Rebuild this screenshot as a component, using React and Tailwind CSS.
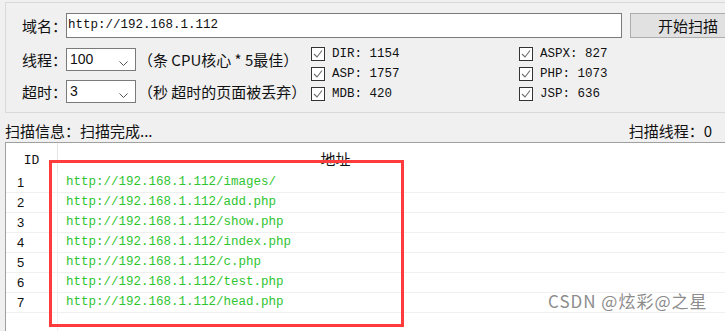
import React from "react";

const mono = "font-['Liberation_Mono',monospace]";

function Check() {
  return (
    <svg width="14" height="14" viewBox="0 0 14 14" className="shrink-0">
      <rect x="0.5" y="0.5" width="13" height="13" fill="#ffffff" stroke="#333333" />
      <polyline points="3,7 6,10 11,3.5" fill="none" stroke="#6a6a6a" strokeWidth="1.1" />
    </svg>
  );
}

function Chevron() {
  return (
    <svg width="9" height="5" viewBox="0 0 9 5" className="absolute right-[7px] top-[12px]">
      <path d="M0.5 0.5 L4.5 4.5 L8.5 0.5" fill="none" stroke="#555555" strokeWidth="1" />
    </svg>
  );
}

function Label({ children }) {
  return (
    <div className="w-[60px] shrink-0 pl-[16px] text-[15px] leading-[18px] text-[#111] whitespace-nowrap">{children}</div>
  );
}

function SelectRow({ label, value, hint, className }) {
  return (
    <div className={"flex items-center h-[23px] " + className}>
      <Label>{label}</Label>
      <div className="relative shrink-0 w-[70px] h-[23px] border border-[#7a7a7a] bg-white flex items-center pl-[3px] text-[14px] font-['Liberation_Sans',sans-serif] text-[#111]">
        {value}
        <Chevron />
      </div>
      <div className="ml-[2px] text-[15px] leading-[18px] text-[#111] whitespace-nowrap">{hint}</div>
    </div>
  );
}

function CheckItem({ text }) {
  return (
    <div className="flex items-center h-[20px] gap-[7px]">
      <Check />
      <span className={mono + " text-[12.5px] leading-[16px] text-[#111] whitespace-nowrap"}>{text}</span>
    </div>
  );
}

const urls = [
  "http://192.168.1.112/images/",
  "http://192.168.1.112/add.php",
  "http://192.168.1.112/show.php",
  "http://192.168.1.112/index.php",
  "http://192.168.1.112/c.php",
  "http://192.168.1.112/test.php",
  "http://192.168.1.112/head.php",
];

export default function App() {
  return (
    <div className="relative w-[725px] h-[331px] overflow-hidden bg-[#f0f0f0] font-['Noto_Sans_CJK_SC',sans-serif]">
      {/* group box */}
      <div className="ml-[5px] mt-[2px] h-[111px] border border-r-0 border-[#d9d9d9] pt-[10px]">
        <div className="flex items-center h-[25px]">
          <Label>域名：</Label>
          <div className={"shrink-0 w-[556px] h-[25px] border border-[#7a7a7a] bg-white flex items-center pl-[1px] text-[12.5px] text-[#111] " + mono}>
            http://192.168.1.112
          </div>
          <div className="ml-[8px] w-[116px] h-[25px] shrink-0 border border-[#adadad] bg-[#e1e1e1] flex items-center justify-center text-[15px] leading-[18px] text-[#111]">
            开始扫描
          </div>
        </div>
        <div className="flex mt-[6px]">
          <div className="w-[305px] shrink-0">
            <SelectRow label="线程：" value="100" hint="（条 CPU核心 * 5最佳）" className="mt-[4px]" />
            <SelectRow label="超时：" value="3" hint="（秒 超时的页面被丢弃）" className="mt-[9px]" />
          </div>
          <div className="w-[208px] shrink-0">
            <CheckItem text="DIR: 1154" />
            <CheckItem text="ASP: 1757" />
            <CheckItem text="MDB: 420" />
          </div>
          <div>
            <CheckItem text="ASPX: 827" />
            <CheckItem text="PHP: 1073" />
            <CheckItem text="JSP: 636" />
          </div>
        </div>
      </div>

      {/* status line */}
      <div className="h-[29px] pt-[6px] flex items-center justify-between pl-[5px] pr-[13px] text-[15px] leading-[18px] text-[#111]">
        <span>扫描信息：扫描完成...</span>
        <span>扫描线程：0</span>
      </div>

      {/* table */}
      <div className="ml-[5px] h-[189px] border-l border-t border-[#a0a0a0] bg-white flex flex-col">
        <div className="flex h-[30px] shrink-0">
          <div className={"w-[52px] border-r border-[#e5e5e5] flex items-center justify-center pt-[5px] text-[13px] text-[#111] " + mono}>ID</div>
          <div className="w-[555px] flex items-center justify-center pt-[1px] text-[15px] leading-[18px] text-[#111]">地址</div>
        </div>
        {urls.map((u, i) => (
          <div key={i} className="flex h-[20px] shrink-0 border-b border-[#f0f0f0]">
            <div className="w-[52px] border-r border-[#f0f0f0] pl-[11px] flex items-center text-[13px] font-['Liberation_Sans',sans-serif] text-[#111]">
              {i + 1}
            </div>
            <div className={"pl-[8px] flex items-center text-[12.5px] text-[#2fc52f] whitespace-nowrap " + mono}>{u}</div>
          </div>
        ))}
        <div className="flex flex-1">
          <div className="w-[52px] border-r border-[#f0f0f0]" />
        </div>
      </div>

      {/* red highlight */}
      <div className="absolute left-[49px] top-[160px] w-[355px] h-[167px] border-[3px] border-[#ff3b3b]" />

      {/* watermark */}
      <div className="absolute left-[548px] top-[290px] text-[17px] leading-[22px] tracking-[1px] text-[#8c8c8c] whitespace-nowrap">
        CSDN @炫彩@之星
      </div>
    </div>
  );
}
